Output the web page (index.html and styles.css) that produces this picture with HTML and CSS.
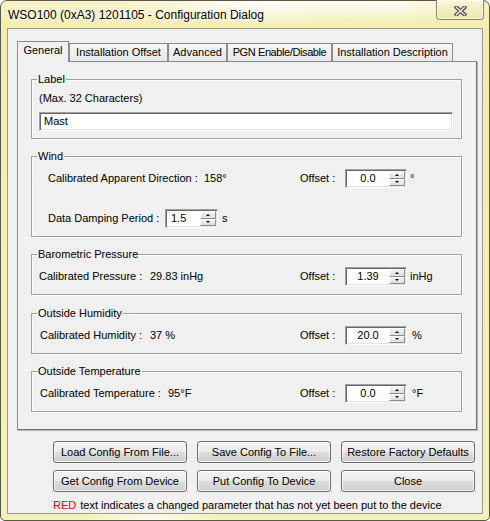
FILE: index.html
```html
<!DOCTYPE html>
<html>
<head>
<meta charset="utf-8">
<title>Configuration Dialog</title>
<link rel="stylesheet" href="styles.css">
</head>
<body>
<div class="window">
  <div class="titlebar">
    <span class="title">WSO100 (0xA3) 1201105 - Configuration Dialog</span>
    <div class="close">
      <svg width="13" height="10" viewBox="0 0 13 10">
        <path d="M2.5 1.5 L10.5 8.5 M10.5 1.5 L2.5 8.5" stroke="#4a4a4a" stroke-width="3.8" stroke-linecap="square" fill="none"/>
        <path d="M2.5 1.5 L10.5 8.5 M10.5 1.5 L2.5 8.5" stroke="#e4e4e4" stroke-width="1.6" stroke-linecap="square" fill="none"/>
      </svg>
    </div>
  </div>
  <div class="client">
    <div class="tabs">
      <div class="tab active t-general">General</div>
      <div class="tab t-offset">Installation Offset</div>
      <div class="tab t-adv">Advanced</div>
      <div class="tab t-pgn">PGN Enable/Disable</div>
      <div class="tab t-desc">Installation Description</div>
    </div>
    <div class="panel">
      <div class="group g-label">
        <div class="gtitle">Label</div>
        <div class="hint">(Max. 32 Characters)</div>
        <div class="textbox">Mast</div>
      </div>

      <div class="group wind">
        <div class="gtitle">Wind</div>
        <div class="row">
          <div class="calib"><span class="clabel">Calibrated Apparent Direction :</span><span>158°</span></div>
          <span class="olabel">Offset :</span>
          <div class="spin"><span class="spin-val">0.0</span><span class="spin-btns"><i class="up"></i><i class="dn"></i></span></div>
          <span class="unit">°</span>
        </div>
        <div class="row row2">
          <span class="clabel damp">Data Damping Period :</span>
          <div class="spin small"><span class="spin-val left">1.5</span><span class="spin-btns"><i class="up"></i><i class="dn"></i></span></div>
          <span class="unit s">s</span>
        </div>
      </div>

      <div class="group pressure">
        <div class="gtitle">Barometric Pressure</div>
        <div class="row">
          <div class="calib"><span class="clabel">Calibrated Pressure :</span><span>29.83 inHg</span></div>
          <span class="olabel">Offset :</span>
          <div class="spin"><span class="spin-val">1.39</span><span class="spin-btns"><i class="up"></i><i class="dn"></i></span></div>
          <span class="unit">inHg</span>
        </div>
      </div>

      <div class="group humidity">
        <div class="gtitle">Outside Humidity</div>
        <div class="row">
          <div class="calib"><span class="clabel">Calibrated Humidity :</span><span>37 %</span></div>
          <span class="olabel">Offset :</span>
          <div class="spin"><span class="spin-val">20.0</span><span class="spin-btns"><i class="up"></i><i class="dn"></i></span></div>
          <span class="unit wide">%</span>
        </div>
      </div>

      <div class="group temperature">
        <div class="gtitle">Outside Temperature</div>
        <div class="row">
          <div class="calib"><span class="clabel">Calibrated Temperature :</span><span>95°F</span></div>
          <span class="olabel">Offset :</span>
          <div class="spin"><span class="spin-val">0.0</span><span class="spin-btns"><i class="up"></i><i class="dn"></i></span></div>
          <span class="unit wide">°F</span>
        </div>
      </div>
    </div>

    <div class="buttons">
      <button class="btn">Load Config From File...</button>
      <button class="btn">Save Config To File...</button>
      <button class="btn">Restore Factory Defaults</button>
      <button class="btn">Get Config From Device</button>
      <button class="btn">Put Config To Device</button>
      <button class="btn">Close</button>
    </div>
    <div class="note"><span class="red">RED</span>text indicates a changed parameter that has not yet been put to the device</div>
  </div>
</div>
</body>
</html>
```
FILE: styles.css
```css
* { box-sizing: border-box; }
html, body { margin: 0; padding: 0; }
body {
  width: 490px;
  height: 521px;
  background: #ffffff;
  font-family: "Liberation Sans", Arial, sans-serif;
  font-size: 11px;
  color: #000;
  overflow: hidden;
}

.window {
  width: 490px;
  height: 521px;
  display: flex;
  flex-direction: column;
  border: 1px solid #5a5846;
  border-radius: 7px 7px 5px 5px;
  background:
    radial-gradient(150px 22px at 270px 2px, rgba(255,255,255,0.95), rgba(255,255,255,0)),
    radial-gradient(90px 16px at 390px 4px, rgba(255,255,255,0.7), rgba(255,255,255,0)),
    radial-gradient(70px 10px at 150px 518px, rgba(255,255,255,0.8), rgba(255,255,255,0)),
    linear-gradient(180deg, #f8f4cc 0%, #f4edb0 5%, #f6f0ba 100%);
}

.titlebar {
  height: 27px;
  display: flex;
  align-items: flex-start;
  padding-left: 7px;
}
.title {
  margin-top: 6px;
  font-size: 12px;
  line-height: 16px;
  color: #000;
  text-shadow: 0 0 6px #fff, 0 0 3px #fff;
}
.close {
  width: 48px;
  height: 20px;
  margin: -1px 5px 0 auto;
  border: 1px solid #8b8670;
  border-top: none;
  border-radius: 0 0 4px 4px;
  background: linear-gradient(180deg, #fcf9dc 0%, #f4eebf 55%, #efe6a8 100%);
  box-shadow: inset 0 0 0 1px rgba(255,255,255,0.6);
  display: flex;
  justify-content: center;
  padding-top: 6px;
}

.client {
  flex: 1;
  margin: 0 6px 6px 6px;
  border: 1px solid #9c9a80;
  background: #f0f0f0;
  padding: 12px 0 0 9px;
}

.tabs {
  display: flex;
  align-items: flex-end;
  height: 20px;
  position: relative;
  z-index: 1;
}
.tab {
  height: 18px;
  border: 1px solid #898c95;
  border-bottom: none;
  line-height: 16px;
  text-align: center;
  white-space: nowrap;
  background: linear-gradient(180deg, #f6f6f6, #e9e9e9);
}
.tab.active {
  height: 21px;
  margin-bottom: -1px;
  background: #f0f0f0;
}
.t-general { width: 52px; }
.t-offset { width: 99px; }
.t-adv { width: 59px; }
.t-pgn { width: 105px; letter-spacing: -0.4px; }
.t-desc { width: 121px; }

.panel {
  width: 460px;
  border: 1px solid #898c95;
  border-right-color: #6f6f6f;
  border-bottom-color: #6f6f6f;
  box-shadow: 1px 1px 0 #b9b9b9;
  background: #f0f0f0;
  padding: 17px 0 0 13px;
}

.group {
  width: 431px;
  border: 1px solid #a0a0a0;
  box-shadow: inset 1px 1px 0 #fff, 1px 1px 0 #fff;
  margin-bottom: 17px;
  padding-bottom: 8px;
}
.group.pressure { margin-bottom: 18px; }
.gtitle {
  width: fit-content;
  margin: -7px 0 0 5px;
  padding: 0 1px;
  line-height: 13px;
  background: #f0f0f0;
}

.g-label { padding-bottom: 7px; }
.hint {
  margin: 6px 0 0 7px;
  line-height: 13px;
}
.textbox {
  margin: 7px 0 0 7px;
  width: 414px;
  height: 19px;
  border: 1px solid;
  border-color: #a0a0a0 #ffffff #ffffff #a0a0a0;
  box-shadow: inset 1px 1px 0 #696969, inset -1px -1px 0 #e3e3e3;
  background: #fff;
  padding-left: 4px;
  line-height: 17px;
}

.row {
  display: flex;
  align-items: center;
  height: 19px;
  margin-top: 6px;
  line-height: 13px;
  white-space: nowrap;
}
.row2 { margin-top: 21px; }
.wind .row { padding-left: 16px; }
.pressure .row { padding-left: 7px; }
.humidity .row, .temperature .row { padding-left: 8px; }

.calib { display: flex; }
.wind .calib { width: 252px; }
.pressure .calib { width: 261px; }
.humidity .calib, .temperature .calib { width: 260px; }

.wind .clabel { width: 156px; }
.wind .clabel.damp { width: 117px; }
.pressure .clabel { width: 111px; }
.humidity .clabel { width: 110px; }
.temperature .clabel { width: 128px; }

.olabel { width: 45px; }

.spin {
  display: flex;
  width: 62px;
  height: 19px;
  border: 1px solid;
  border-color: #a0a0a0 #ffffff #ffffff #a0a0a0;
  box-shadow: inset 1px 1px 0 #696969, inset -1px -1px 0 #e3e3e3;
  background: #fff;
  padding: 1px 1px 1px 1px;
}
.spin.small { width: 53px; }
.spin-val {
  flex: 1;
  text-align: center;
  line-height: 15px;
  color: #000;
}
.spin-val.left { text-align: left; padding-left: 4px; }
.spin-btns {
  width: 16px;
  display: flex;
  flex-direction: column;
}
.spin-btns i {
  flex: 1;
  display: flex;
  align-items: center;
  justify-content: center;
  border: 1px solid;
  border-color: #ffffff #8e8e8e #8e8e8e #ffffff;
  background: linear-gradient(180deg, #f3f3f3, #dedede);
}
.spin-btns .up::after {
  content: "";
  border-left: 2px solid transparent;
  border-right: 2px solid transparent;
  border-bottom: 2px solid #000;
}
.spin-btns .dn::after {
  content: "";
  border-left: 2px solid transparent;
  border-right: 2px solid transparent;
  border-top: 2px solid #000;
}

.unit { margin-left: 3px; }
.unit.wide { margin-left: 5px; }
.unit.s { margin-left: 4px; }

.buttons {
  display: grid;
  grid-template-columns: repeat(3, 134px);
  grid-auto-rows: 22px;
  column-gap: 10px;
  row-gap: 7px;
  margin: 11px 0 0 36px;
}
.btn {
  font: inherit;
  color: #000;
  padding: 0;
  margin: 0;
  border: 1px solid #707070;
  border-radius: 3px;
  background: linear-gradient(180deg, #f2f2f2 0%, #ebebeb 50%, #dddddd 50%, #cfcfcf 100%);
  box-shadow: inset 0 0 0 1px rgba(255,255,255,0.75);
  line-height: 20px;
  text-align: center;
  white-space: nowrap;
}

.note {
  margin: 7px 0 0 36px;
  line-height: 13px;
  white-space: nowrap;
}
.red { color: #ff0000; margin-right: 4px; }
```
